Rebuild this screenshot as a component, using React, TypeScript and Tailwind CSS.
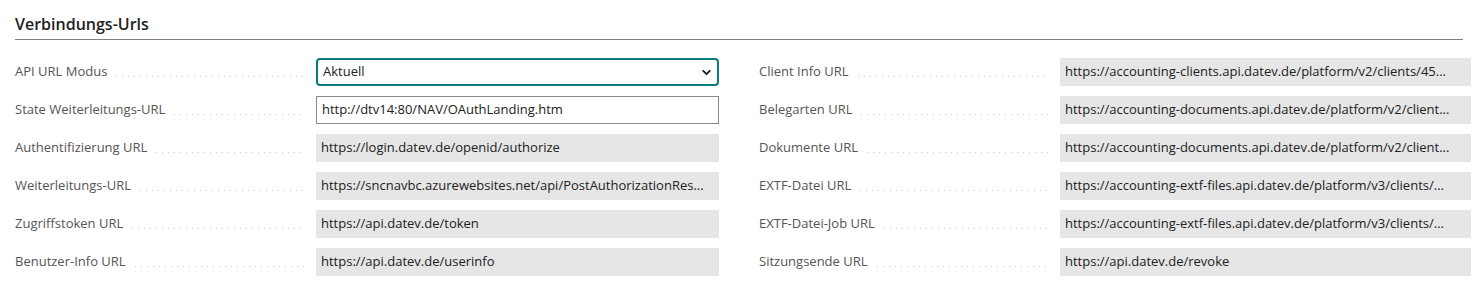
import { ChevronDown } from "lucide-react";

type Row = {
  label: string;
  value: string;
  kind?: "select" | "input" | "readonly";
};

const left: Row[] = [
  { label: "API URL Modus", value: "Aktuell", kind: "select" },
  { label: "State Weiterleitungs-URL", value: "http://dtv14:80/NAV/OAuthLanding.htm", kind: "input" },
  { label: "Authentifizierung URL", value: "https://login.datev.de/openid/authorize" },
  { label: "Weiterleitungs-URL", value: "https://sncnavbc.azurewebsites.net/api/PostAuthorizationRes..." },
  { label: "Zugriffstoken URL", value: "https://api.datev.de/token" },
  { label: "Benutzer-Info URL", value: "https://api.datev.de/userinfo" },
];

const right: Row[] = [
  { label: "Client Info URL", value: "https://accounting-clients.api.datev.de/platform/v2/clients/45..." },
  { label: "Belegarten URL", value: "https://accounting-documents.api.datev.de/platform/v2/client..." },
  { label: "Dokumente URL", value: "https://accounting-documents.api.datev.de/platform/v2/client..." },
  { label: "EXTF-Datei URL", value: "https://accounting-extf-files.api.datev.de/platform/v3/clients/..." },
  { label: "EXTF-Datei-Job URL", value: "https://accounting-extf-files.api.datev.de/platform/v3/clients/..." },
  { label: "Sitzungsende URL", value: "https://api.datev.de/revoke" },
];

function Field({ row }: { row: Row }) {
  if (row.kind === "select") {
    return (
      <div className="flex h-[28px] w-full items-center justify-between rounded-[4px] border-2 border-[#0a7b7c] pl-[5px] pr-[4px] text-[#212121]">
        <span>{row.value}</span>
        <ChevronDown className="h-[13px] w-[13px] text-[#212121]" strokeWidth={3.5} />
      </div>
    );
  }
  if (row.kind === "input") {
    return (
      <div className="flex h-[28px] w-full items-center border border-[#8a8a8a] bg-white pl-[5px] text-[#212121]">
        <span className="whitespace-nowrap">{row.value}</span>
      </div>
    );
  }
  return (
    <div className="flex h-[28px] w-full items-center overflow-hidden bg-[#e6e6e7] pl-[5px] text-[#212121]">
      <span className="whitespace-nowrap">{row.value}</span>
    </div>
  );
}

function FieldRow({ row, fieldWidth }: { row: Row; fieldWidth: string }) {
  return (
    <div className="flex h-[28px] items-center">
      <span className="whitespace-nowrap text-[#555555]">{row.label}</span>
      <span className="ml-[9px] mr-[11px] mt-[9px] h-px flex-1 bg-[linear-gradient(to_right,#c8c8c8_1px,transparent_1px)] bg-[length:6px_1px] bg-repeat-x" />
      <div className={fieldWidth}>
        <Field row={row} />
      </div>
    </div>
  );
}

export default function App() {
  return (
    <div className="h-[300px] w-[1473px] bg-white pl-[15px] pr-[2px] pt-[14px] font-['Segoe_UI','Open_Sans',sans-serif] text-[13px]">
      <h2 className="pb-[4px] text-[16px] font-semibold leading-[21px] text-[#212121]">Verbindungs-Urls</h2>
      <div className="mr-[8px] h-px bg-[#808080]" />
      <div className="mt-[18px] flex gap-[40px]">
        <div className="flex w-[704px] shrink-0 flex-col gap-[10px]">
          {left.map((r) => (
            <FieldRow key={r.label} row={r} fieldWidth="w-[403px] shrink-0" />
          ))}
        </div>
        <div className="flex w-[712px] shrink-0 flex-col gap-[10px]">
          {right.map((r) => (
            <FieldRow key={r.label} row={r} fieldWidth="w-[411px] shrink-0" />
          ))}
        </div>
      </div>
    </div>
  );
}
